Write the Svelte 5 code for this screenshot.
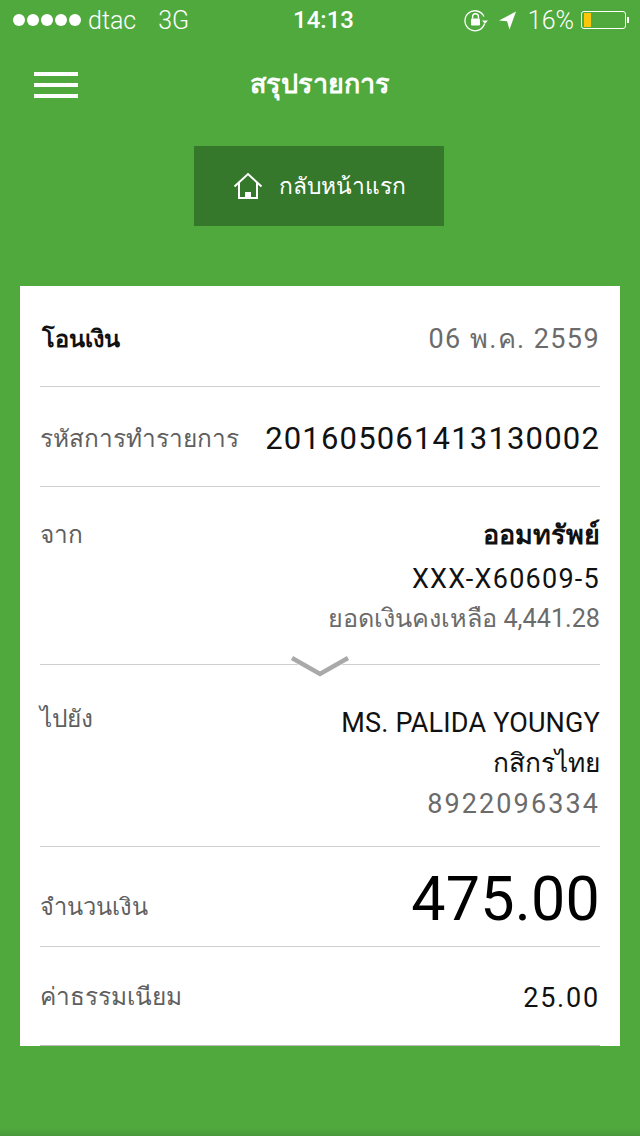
<script>
  const rows = [
    { label: 'รหัสการทำรายการ', value: '201605061413130002' }
  ];
</script>

<div class="screen">
  <div class="status">
    <div class="status-left">
      <span class="dots"><i></i><i></i><i></i><i></i><i></i></span>
      <span>dtac</span>
      <span class="net">3G</span>
    </div>
    <div class="clock">14:13</div>
    <div class="status-right">
      <svg width="24" height="24" viewBox="0 0 24 24" fill="none" stroke="#fff">
        <path d="M20 8.500A10 10 0 1 0 20.600 15.500" stroke-width="1.300" />
        <path d="M18 12.500h6l-3 3.200z" fill="#fff" stroke="none" />
        <path d="M8.600 10.500V8.600a2.900 2.900 0 0 1 5.800 0v1.900" stroke-width="1.400" />
        <rect x="7" y="10.500" width="9" height="7" rx="1" fill="#fff" stroke="none" />
      </svg>
      <svg class="arrow" width="19" height="20" viewBox="0 0 18 20">
        <path d="M17.500 1.500 0.500 10.500 8.600 11.200 11 19.500z" fill="#fff" />
      </svg>
      <span class="pct">16%</span>
      <span class="battery"><span class="level"></span></span>
      <span class="nub"></span>
    </div>
  </div>

  <header class="topbar">
    <button class="burger" aria-label="menu"><span></span><span></span><span></span></button>
    <h1>สรุปรายการ</h1>
  </header>

  <div class="home-wrap">
    <button class="home">
      <svg width="30" height="28" viewBox="0 0 30 28" fill="none" stroke="#fff" stroke-width="2">
        <path d="M1.500 14.500 15 2l13.500 12.500" />
        <path d="M6 11v15h18V11" />
        <path d="M12 26v-6h6v6" fill="#fff" stroke="none" />
      </svg>
      <span>กลับหน้าแรก</span>
    </button>
  </div>

  <main class="card">
    <div class="row first">
      <strong class="title">โอนเงิน</strong>
      <span class="date">06 พ.ค. 2559</span>
    </div>
    {#each rows as row}
      <div class="row ref">
        <span class="label">{row.label}</span>
        <span class="code">{row.value}</span>
      </div>
    {/each}
    <div class="row from">
      <span class="label">จาก</span>
      <div class="stack">
        <strong>ออมทรัพย์</strong>
        <span class="dark acct-no">XXX-X60609-5</span>
        <span class="balance">ยอดเงินคงเหลือ 4,441.28</span>
      </div>
      <svg class="chevron" width="62" height="24" viewBox="0 0 62 24" fill="none">
        <path d="M1 0H61V7L31 24 1 7z" fill="#fff" />
        <path d="M3 5 31 21 59 5" stroke="#a9a9a9" stroke-width="4.500" />
      </svg>
    </div>
    <div class="row to">
      <span class="label">ไปยัง</span>
      <div class="stack">
        <span class="dark name">MS. PALIDA YOUNGY</span>
        <span class="dark bank">กสิกรไทย</span>
        <span class="acct">8922096334</span>
      </div>
    </div>
    <div class="row amount">
      <span class="label">จำนวนเงิน</span>
      <span class="big">475.00</span>
    </div>
    <div class="row fee">
      <span class="label">ค่าธรรมเนียม</span>
      <span class="dark num">25.00</span>
    </div>
  </main>
  <div class="bottom-shade"></div>
</div>

<style>
  :global(body) {
    margin: 0;
    background: #4fa93d;
    font-family: "Roboto", "Noto Sans", sans-serif;
  }
  .screen {
    height: 1136px;
    overflow: hidden;
    background: #4fa93d;
    color: #fff;
    position: relative;
  }
  .bottom-shade {
    position: absolute;
    left: 0;
    right: 0;
    bottom: 0;
    height: 8px;
    background: linear-gradient(#4fa93d, #47983a);
  }

  .status {
    height: 40px;
    display: flex;
    align-items: center;
    justify-content: space-between;
    position: relative;
    font-weight: 300;
    font-size: 25px;
  }
  .status-left { display: flex; align-items: center; padding-left: 13px; gap: 7px; }
  .net { margin-left: 15px; }
  .dots { display: flex; gap: 2px; }
  .dots i { width: 12px; height: 12px; border-radius: 50%; background: #fff; display: block; }
  .clock {
    position: absolute;
    left: 0;
    right: 0;
    text-align: center;
    font-weight: 500;
    font-size: 24px;
    padding-left: 7px;
  }
  .status-right { display: flex; align-items: center; padding-right: 11px; }
  .arrow { margin-left: 10px; }
  .pct { margin-left: 11px; }
  .battery {
    margin-left: 7px;
    width: 45px;
    height: 18px;
    border: 1px solid #fff;
    border-radius: 3px;
    padding: 1px 2px;
    box-sizing: border-box;
    display: block;
  }
  .level { display: block; width: 7px; height: 100%; background: #fbc70b; }
  .nub { width: 2px; height: 6px; margin-left: 1px; background: #fff; }

  .topbar {
    height: 90px;
    display: flex;
    align-items: center;
    position: relative;
  }
  .burger {
    margin-left: 34px;
    width: 44px;
    height: 26px;
    padding: 0;
    border: 0;
    background: none;
    display: flex;
    flex-direction: column;
    justify-content: space-between;
  }
  .burger span { display: block; height: 4px; background: #fff; }
  h1 {
    margin: 0 0 4px;
    position: absolute;
    left: 0;
    right: 0;
    text-align: center;
    font-size: 27px;
    font-weight: 700;
  }

  .home-wrap { display: flex; justify-content: center; padding: 16px 2px 0 0; }
  .home {
    width: 250px;
    height: 80px;
    border: 0;
    background: #35772b;
    color: #fff;
    font-family: inherit;
    font-size: 22.800px;
    display: flex;
    align-items: center;
    justify-content: center;
    gap: 16px;
  }

  .card {
    margin: 60px 20px 0;
    height: 760px;
    padding: 0 20px;
    background: #fff;
    box-sizing: border-box;
    color: #5f5f5f;
    font-size: 24.400px;
  }
  .row {
    display: flex;
    justify-content: space-between;
    box-sizing: border-box;
    border-bottom: 1px solid #cfcfcf;
    position: relative;
  }
  .first { height: 101px; align-items: center; padding-top: 4px; }
  .ref { height: 100px; align-items: center; }
  .ref .label, .ref .code { padding-top: 3px; }
  .from { height: 178px; padding-top: 28px; }
  .to { height: 182px; padding-top: 34px; }
  .amount { height: 100px; align-items: flex-end; padding-bottom: 17px; }
  .amount .label { font-size: 23.600px; margin-bottom: 4px; }
  .fee { height: 99px; align-items: center; border-bottom-color: #bbb; }

  .title { color: #111; font-size: 23.500px; padding-left: 2px; font-weight: 600; }
  .date { letter-spacing: 1.400px; font-size: 27px; color: #6b6b6b; }
  .code { color: #111; font-size: 31px; letter-spacing: 1.180px; }
  .stack {
    display: flex;
    flex-direction: column;
    align-items: flex-end;
    gap: 6px;
    color: #111;
    font-size: 27px;
    line-height: 35px;
  }
  .stack strong { font-size: 27px; font-weight: 600; margin-top: 3px; }
  .dark { color: #111; }
  .acct-no { letter-spacing: 1.250px; margin-top: 3px; }
  .name { margin-top: 7px; letter-spacing: 0.180px; }
  .bank { font-size: 26.300px; margin-top: -1px; font-weight: 500; }
  .num { font-size: 27px; letter-spacing: 1.800px; padding-top: 4px; }
  .balance { font-size: 25.200px; color: #6b6b6b; margin-top: -2px; }
  .acct { letter-spacing: 2.100px; color: #6b6b6b; }
  .big { color: #000; font-size: 61px; line-height: 60px; letter-spacing: 0.200px; }
  .chevron { position: absolute; left: 249px; bottom: -13px; }
</style>
